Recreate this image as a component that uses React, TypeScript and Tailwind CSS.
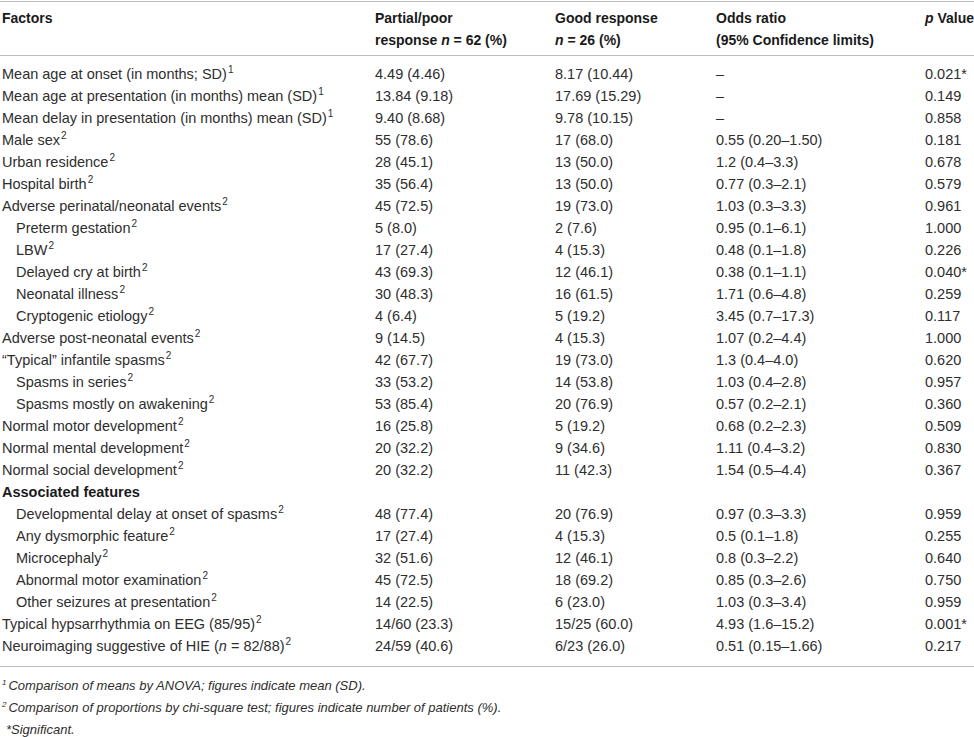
import React from "react";

type Row = {
  label: React.ReactNode;
  sup?: string;
  indent?: boolean;
  bold?: boolean;
  poor?: string;
  good?: string;
  odds?: string;
  p?: string;
};

const rows: Row[] = [
  { label: "Mean age at onset (in months; SD)", sup: "1", poor: "4.49 (4.46)", good: "8.17 (10.44)", odds: "–", p: "0.021*" },
  { label: "Mean age at presentation (in months) mean (SD)", sup: "1", poor: "13.84 (9.18)", good: "17.69 (15.29)", odds: "–", p: "0.149" },
  { label: "Mean delay in presentation (in months) mean (SD)", sup: "1", poor: "9.40 (8.68)", good: "9.78 (10.15)", odds: "–", p: "0.858" },
  { label: "Male sex", sup: "2", poor: "55 (78.6)", good: "17 (68.0)", odds: "0.55 (0.20–1.50)", p: "0.181" },
  { label: "Urban residence", sup: "2", poor: "28 (45.1)", good: "13 (50.0)", odds: "1.2 (0.4–3.3)", p: "0.678" },
  { label: "Hospital birth", sup: "2", poor: "35 (56.4)", good: "13 (50.0)", odds: "0.77 (0.3–2.1)", p: "0.579" },
  { label: "Adverse perinatal/neonatal events", sup: "2", poor: "45 (72.5)", good: "19 (73.0)", odds: "1.03 (0.3–3.3)", p: "0.961" },
  { label: "Preterm gestation", sup: "2", indent: true, poor: "5 (8.0)", good: "2 (7.6)", odds: "0.95 (0.1–6.1)", p: "1.000" },
  { label: "LBW", sup: "2", indent: true, poor: "17 (27.4)", good: "4 (15.3)", odds: "0.48 (0.1–1.8)", p: "0.226" },
  { label: "Delayed cry at birth", sup: "2", indent: true, poor: "43 (69.3)", good: "12 (46.1)", odds: "0.38 (0.1–1.1)", p: "0.040*" },
  { label: "Neonatal illness", sup: "2", indent: true, poor: "30 (48.3)", good: "16 (61.5)", odds: "1.71 (0.6–4.8)", p: "0.259" },
  { label: "Cryptogenic etiology", sup: "2", indent: true, poor: "4 (6.4)", good: "5 (19.2)", odds: "3.45 (0.7–17.3)", p: "0.117" },
  { label: "Adverse post-neonatal events", sup: "2", poor: "9 (14.5)", good: "4 (15.3)", odds: "1.07 (0.2–4.4)", p: "1.000" },
  { label: "“Typical” infantile spasms", sup: "2", poor: "42 (67.7)", good: "19 (73.0)", odds: "1.3 (0.4–4.0)", p: "0.620" },
  { label: "Spasms in series", sup: "2", indent: true, poor: "33 (53.2)", good: "14 (53.8)", odds: "1.03 (0.4–2.8)", p: "0.957" },
  { label: "Spasms mostly on awakening", sup: "2", indent: true, poor: "53 (85.4)", good: "20 (76.9)", odds: "0.57 (0.2–2.1)", p: "0.360" },
  { label: "Normal motor development", sup: "2", poor: "16 (25.8)", good: "5 (19.2)", odds: "0.68 (0.2–2.3)", p: "0.509" },
  { label: "Normal mental development", sup: "2", poor: "20 (32.2)", good: "9 (34.6)", odds: "1.11 (0.4–3.2)", p: "0.830" },
  { label: "Normal social development", sup: "2", poor: "20 (32.2)", good: "11 (42.3)", odds: "1.54 (0.5–4.4)", p: "0.367" },
  { label: "Associated features", bold: true },
  { label: "Developmental delay at onset of spasms", sup: "2", indent: true, poor: "48 (77.4)", good: "20 (76.9)", odds: "0.97 (0.3–3.3)", p: "0.959" },
  { label: "Any dysmorphic feature", sup: "2", indent: true, poor: "17 (27.4)", good: "4 (15.3)", odds: "0.5 (0.1–1.8)", p: "0.255" },
  { label: "Microcephaly", sup: "2", indent: true, poor: "32 (51.6)", good: "12 (46.1)", odds: "0.8 (0.3–2.2)", p: "0.640" },
  { label: "Abnormal motor examination", sup: "2", indent: true, poor: "45 (72.5)", good: "18 (69.2)", odds: "0.85 (0.3–2.6)", p: "0.750" },
  { label: "Other seizures at presentation", sup: "2", indent: true, poor: "14 (22.5)", good: "6 (23.0)", odds: "1.03 (0.3–3.4)", p: "0.959" },
  { label: "Typical hypsarrhythmia on EEG (85/95)", sup: "2", poor: "14/60 (23.3)", good: "15/25 (60.0)", odds: "4.93 (1.6–15.2)", p: "0.001*" },
  {
    label: (
      <>
        Neuroimaging suggestive of HIE (<i>n</i> = 82/88)
      </>
    ),
    sup: "2",
    poor: "24/59 (40.6)",
    good: "6/23 (26.0)",
    odds: "0.51 (0.15–1.66)",
    p: "0.217",
  },
];

const cols = "grid grid-cols-[373px_180px_161px_209px_1fr]";

function Sup({ children }: { children: React.ReactNode }) {
  return <sup className="relative -top-[6px] ml-[1px] text-[10px]">{children}</sup>;
}

export default function App() {
  return (
    <div
      className="h-[737px] w-[974px] overflow-hidden bg-white text-[14.5px] text-[#2e2e2e]"
      style={{ fontFamily: '"Liberation Sans", Arial, sans-serif' }}
    >
      <div className="mt-px border-y border-[#bcbcbc] pb-[4px] pt-[5px] pl-[2px] text-[14px] font-bold leading-[22px] text-[#1a1a1a]">
        <div className={cols}>
          <div>Factors</div>
          <div>
            Partial/poor
            <br />
            response <i>n</i> = 62 (%)
          </div>
          <div>
            Good response
            <br />
            <i>n</i> = 26 (%)
          </div>
          <div>
            Odds ratio
            <br />
            (95% Confidence limits)
          </div>
          <div className="whitespace-nowrap">
            <i>p</i> Value
          </div>
        </div>
      </div>

      <div className="border-b border-[#bcbcbc] pb-[9px] pt-[7px] pl-[2px] leading-[22px]">
        {rows.map((r, i) => (
          <div key={i} className={`${cols} h-[22px] whitespace-nowrap`}>
            <div className={`${r.indent ? "pl-[14px]" : ""} ${r.bold ? "font-bold text-[#1a1a1a]" : ""}`}>
              {r.label}
              {r.sup && <Sup>{r.sup}</Sup>}
            </div>
            <div>{r.poor}</div>
            <div>{r.good}</div>
            <div>{r.odds}</div>
            <div>{r.p}</div>
          </div>
        ))}
      </div>

      <div className="pl-[2px] pt-[8px] text-[13px] italic leading-[22px] text-[#2e2e2e]">
        <div>
          <sup className="relative -top-[5px] mr-[2px] text-[8px]">1</sup>Comparison of means by ANOVA; figures indicate mean (SD).
        </div>
        <div>
          <sup className="relative -top-[5px] mr-[2px] text-[8px]">2</sup>Comparison of proportions by chi-square test; figures indicate number of patients (%).
        </div>
        <div className="pl-[4px]">*Significant.</div>
      </div>
    </div>
  );
}
